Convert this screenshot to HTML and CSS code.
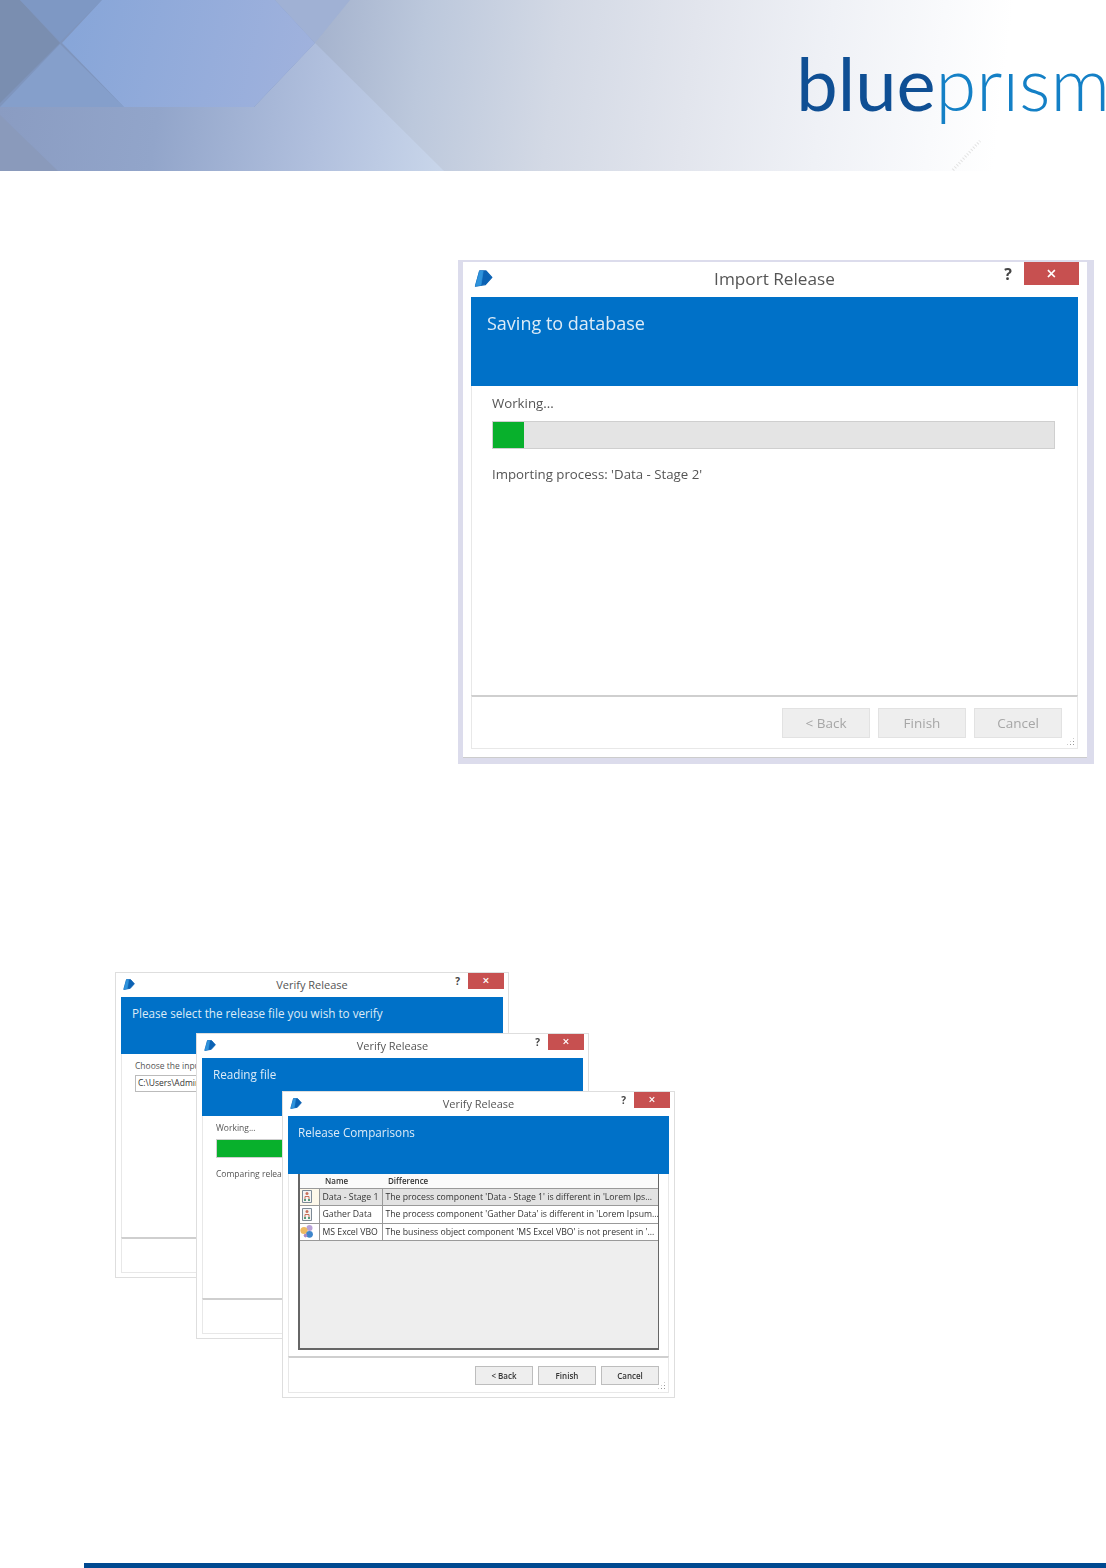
FILE: index.html
```html
<!DOCTYPE html>
<html lang="en">
<head>
  <meta charset="UTF-8" />
  <title>Blue Prism - Release Manager</title>
  <link rel="stylesheet" href="styles.css">
</head>
<body>
  <svg width="0" height="0" class="defs">
    <symbol id="bp" viewBox="0 0 12 11">
      <path d="M3.5 .6H7.6L11.4 4.8L7.2 9.4L.8 10.4Z" fill="#0b62b4" stroke="#0b62b4" stroke-width=".8" stroke-linejoin="round" />
      <path d="M3.5 .6H5.8L4.4 9.8L.8 10.4Z" fill="#2f93dc" stroke="#2f93dc" stroke-width=".4" stroke-linejoin="round" />
    </symbol>
    <symbol id="proc" viewBox="0 0 12 13">
      <path d="M1.5 .5H10.5V12.5H1.5Z" fill="#f4f4f4" stroke="#7d8a96" />
      <circle cx="6" cy="3.6" r="1.5" fill="#c9705a" />
      <path d="M4 9V6.5H8V9" fill="none" stroke="#c9705a" />
      <path d="M3 11V9H5V11ZM7 11V9H9V11Z" fill="#5a9a7a" />
    </symbol>
    <symbol id="obj" viewBox="0 0 14 13">
      <circle cx="9.5" cy="3" r="3" fill="#b8a0d8" />
      <circle cx="4" cy="5.5" r="3.6" fill="#eeba62" />
      <circle cx="9.5" cy="9.3" r="3.4" fill="#3f86cc" />
      <circle cx="5.5" cy="10.6" r="1.8" fill="#a78cc8" />
    </symbol>
    <linearGradient id="hexFill" gradientUnits="userSpaceOnUse" x1="62" y1="0" x2="315" y2="60">
      <stop offset="0" stop-color="#86a5d8" />
      <stop offset="1" stop-color="#a0b2dd" />
    </linearGradient>
    <linearGradient id="bandFill" gradientUnits="userSpaceOnUse" x1="0" y1="107" x2="444" y2="171">
      <stop offset="0" stop-color="#8a9cc2" />
      <stop offset=".35" stop-color="#92a5ca" />
      <stop offset=".7" stop-color="#b0bfdd" />
      <stop offset="1" stop-color="#c9d6ea" />
    </linearGradient>
  </svg>

  <header class="banner">
    <svg class="banner-art" viewBox="0 0 1106 171" preserveAspectRatio="none">
      <polygon points="0,0 275,0 315,43 254,108 0,108" fill="#7f95bd" />
      <polygon points="0,107 124,107 254,107 315,43 444,171 0,171" fill="url(#bandFill)" />
      <polygon points="0,0 20,0 60,43 0,103" fill="#7a8eb0" />
      <polygon points="20,0 102,0 60,42" fill="#7e98c4" />
      <polygon points="275,0 350,0 315,43" fill="#a0b1d4" />
      <polygon points="0,107 60,44 124,107" fill="#859fcb" />
      <polygon points="102,0 275,0 315,43 254,107 124,107 62,43" fill="url(#hexFill)" />
      <polygon points="0,115 58,171 0,171" fill="#8a9abb" />
      <path d="M953 170L980 141" stroke="#e2e2e2" stroke-width="3" stroke-dasharray="1 2" fill="none" />
    </svg>
    <div class="logo" aria-label="blueprism"><span class="logo-blue">blue</span><span class="logo-prism">prısm</span></div>
  </header>

  <main>
    <figure class="shot">
      <div class="win win-large">
        <div class="win-title">
          <svg class="win-icon"><use href="#bp" /></svg>
          <span class="win-name">Import Release</span>
          <div class="win-controls"><span class="win-help">?</span><span class="win-close">×</span></div>
        </div>
        <div class="win-banner">Saving to database</div>
        <div class="win-body">
          <p class="status">Working...</p>
          <div class="progress"><div class="progress-fill" style="width: 5.6%"></div></div>
          <p class="status status-detail">Importing process: 'Data - Stage 2'</p>
        </div>
        <div class="win-foot">
          <button class="btn is-disabled">&lt; Back</button>
          <button class="btn is-disabled">Finish</button>
          <button class="btn is-disabled">Cancel</button>
          <span class="grip"></span>
        </div>
      </div>
    </figure>

    <figure class="stack">
      <div class="win win-small win-a">
        <div class="win-title">
          <svg class="win-icon"><use href="#bp" /></svg>
          <span class="win-name">Verify Release</span>
          <div class="win-controls"><span class="win-help">?</span><span class="win-close">×</span></div>
        </div>
        <div class="win-banner">Please select the release file you wish to verify</div>
        <div class="win-body">
          <p class="status">Choose the input</p>
          <div class="path-input">C:\Users\Admin</div>
        </div>
        <div class="win-foot"></div>
      </div>

      <div class="win win-small win-b">
        <div class="win-title">
          <svg class="win-icon"><use href="#bp" /></svg>
          <span class="win-name">Verify Release</span>
          <div class="win-controls"><span class="win-help">?</span><span class="win-close">×</span></div>
        </div>
        <div class="win-banner">Reading file</div>
        <div class="win-body">
          <p class="status">Working...</p>
          <div class="progress"><div class="progress-fill" style="width: 60%"></div></div>
          <p class="status status-detail">Comparing release</p>
        </div>
        <div class="win-foot"></div>
      </div>

      <div class="win win-small win-c">
        <div class="win-title">
          <svg class="win-icon"><use href="#bp" /></svg>
          <span class="win-name">Verify Release</span>
          <div class="win-controls"><span class="win-help">?</span><span class="win-close">×</span></div>
        </div>
        <div class="win-banner">Release Comparisons</div>
        <div class="win-body win-body-list">
          <div class="list">
            <table class="compare">
              <thead>
                <tr><th class="col-icon"></th><th class="col-name">Name</th><th>Difference</th></tr>
              </thead>
              <tbody>
                <tr class="is-selected">
                  <td class="col-icon"><svg class="row-icon"><use href="#proc" /></svg></td>
                  <td class="col-name">Data - Stage 1</td>
                  <td>The process component 'Data - Stage 1' is different in 'Lorem Ips...</td>
                </tr>
                <tr>
                  <td class="col-icon"><svg class="row-icon"><use href="#proc" /></svg></td>
                  <td class="col-name">Gather Data</td>
                  <td>The process component 'Gather Data' is different in 'Lorem Ipsum...</td>
                </tr>
                <tr>
                  <td class="col-icon"><svg class="row-icon row-icon-wide"><use href="#obj" /></svg></td>
                  <td class="col-name">MS Excel VBO</td>
                  <td>The business object component 'MS Excel VBO' is not present in '...</td>
                </tr>
              </tbody>
            </table>
          </div>
        </div>
        <div class="win-foot">
          <button class="btn">&lt; Back</button>
          <button class="btn">Finish</button>
          <button class="btn">Cancel</button>
          <span class="grip"></span>
        </div>
      </div>
    </figure>
  </main>

  <div class="page-rule"></div>
</body>
</html>
```

FILE: styles.css
```css
:root {
  --win-blue: #0071c8;
  --bar-green: #08b02c;
}

body {
  margin: 0;
  width: 1106px;
  height: 1568px;
  overflow: hidden;
  background: white;
  font-family: "Open Sans", sans-serif;
  color: #444;
}

.defs {
  position: absolute;
}

figure {
  margin: 0;
}

p {
  margin: 0;
}

/* page banner */
.banner {
  position: relative;
  height: 171px;
  overflow: hidden;
  display: flex;
  justify-content: flex-end;
  background: linear-gradient(97deg, #a4b2cd 28%, #bcc8dc 38%, #d3d9e5 50%, #e2e5ed 62%, #eff1f6 74%, #f9fafc 84%, white 90%);
}

.banner-art {
  position: absolute;
  left: 0;
  top: 0;
  width: 100%;
  height: 100%;
}

.logo {
  position: relative;
  margin: 33px -4px 0 0;
  font-family: Lato, sans-serif;
  font-size: 74px;
  line-height: 100px;
  height: 100px;
  white-space: nowrap;
}

.logo-blue {
  color: #0f4f94;
  font-weight: 400;
}

.logo-prism {
  color: #1480c6;
  font-weight: 300;
}

/* dialog windows */
.win {
  box-sizing: border-box;
  display: flex;
  flex-direction: column;
  background: white;
}

.win-title {
  display: grid;
  grid-template-columns: 1fr auto 1fr;
  align-items: start;
}

.win-name {
  color: #555;
}

.win-controls {
  display: flex;
  justify-content: flex-end;
  align-items: center;
}

.win-help {
  font-weight: 700;
  color: #444;
}

.win-close {
  background: #c75050;
  color: white;
  text-align: center;
  font-weight: 600;
}

.win-banner {
  background: var(--win-blue);
  color: #dcebf7;
  flex-shrink: 0;
}

.win-body {
  flex: 1;
  border-left: 1px solid #e8e8e8;
  border-right: 1px solid #e8e8e8;
}

.win-foot {
  display: flex;
  justify-content: flex-end;
  position: relative;
  box-sizing: border-box;
  border: 1px solid #e8e8e8;
  border-top: 2px solid #cfcfcf;
}

.status {
  color: #555;
}

.progress {
  background: #e4e4e4;
  border: 1px solid #cfcfcf;
  box-sizing: border-box;
}

.progress-fill {
  height: 100%;
  background: var(--bar-green);
}

.btn {
  font-family: inherit;
  box-sizing: border-box;
  padding: 0;
  background: #eeeeee;
  color: #333;
  border: 1px solid #bdbdbd;
}

.btn.is-disabled {
  color: #a6a6a6;
  border-color: #e2e2e2;
}

.grip {
  position: absolute;
  right: 2px;
  bottom: 2px;
  width: 9px;
  height: 9px;
  background: radial-gradient(circle, #999 0.8px, transparent 1px) 0 0 / 3px 3px;
  clip-path: polygon(100% 0, 100% 100%, 0 100%);
}

/* the big single screenshot */
.shot {
  box-sizing: border-box;
  width: 636px;
  height: 504px;
  margin: 89px 0 0 458px;
  padding: 2px 7px 6px 5px;
  background: #dcdcec;
  filter: blur(0.6px);
}

.win-large {
  height: 100%;
  padding: 0 9px 8px 8px;
  border-bottom: 1px solid #ccc;
}

.win-large .win-title {
  height: 35px;
}

.win-large .win-icon {
  width: 19px;
  height: 17px;
  margin: 8px 0 0 3px;
}

.win-large .win-name {
  font-size: 17.2px;
  line-height: 33px;
}

.win-large .win-controls {
  margin-right: -1px;
}

.win-large .win-help {
  font-size: 16px;
  margin-right: 12px;
}

.win-large .win-close {
  width: 55px;
  height: 23px;
  font-size: 18px;
  line-height: 22px;
}

.win-large .win-banner {
  height: 89px;
  padding: 13px 0 0 16px;
  font-size: 18px;
  line-height: 26px;
  box-sizing: border-box;
}

.win-large .win-body {
  padding: 7px 22px 0 20px;
}

.win-large .status {
  font-size: 13.25px;
  line-height: 20px;
}

.win-large .progress {
  height: 28px;
  margin-top: 8px;
}

.win-large .status-detail {
  margin-top: 15px;
}

.win-large .win-foot {
  height: 54px;
  gap: 8px;
  padding: 11px 15px 0 0;
}

.win-large .btn {
  width: 88px;
  height: 30px;
  font-size: 13.5px;
}

/* the small overlapping dialogs */
.stack {
  position: relative;
  width: 560px;
  height: 426px;
  margin: 208px 0 0 115px;
  filter: blur(0.3px);
}

.win-small {
  position: absolute;
  padding: 0 5px 4px;
  border: 1px solid #dedede;
}

.win-a {
  left: 0;
  top: 0;
  width: 394px;
  height: 306px;
}

.win-b {
  left: 81px;
  top: 61px;
  width: 393px;
  height: 306px;
}

.win-b .win-foot {
  height: 35px;
}

.win-c {
  left: 167px;
  top: 119px;
  width: 393px;
  height: 307px;
}

.win-small .win-title {
  height: 24px;
}

.win-small .win-icon {
  width: 12px;
  height: 11px;
  margin: 6px 0 0 2px;
}

.win-small .win-name {
  font-size: 11px;
  line-height: 23px;
}

.win-small .win-controls {
  margin-right: -1px;
}

.win-small .win-help {
  font-size: 10px;
  margin-right: 8px;
}

.win-small .win-close {
  width: 36px;
  height: 16px;
  font-size: 12px;
  line-height: 15px;
}

.win-small .win-banner {
  box-sizing: border-box;
  padding: 7px 0 0 11px;
  font-size: 11.7px;
  line-height: 18px;
}

.win-a .win-banner {
  height: 57px;
}

.win-b .win-banner,
.win-c .win-banner {
  height: 58px;
}

.win-small.win-c .win-banner {
  padding-left: 10px;
}

.win-small .win-body {
  padding: 5px 10px 0 13px;
}

.win-small .status {
  font-size: 8.5px;
  line-height: 14px;
}

.path-input {
  box-sizing: border-box;
  height: 17px;
  margin-top: 2px;
  padding-left: 2px;
  border: 1px solid #bbb;
  font-size: 8.5px;
  line-height: 14px;
  color: #333;
  white-space: nowrap;
  overflow: hidden;
}

.win-small .progress {
  height: 19px;
  margin-top: 4px;
}

.win-small .status-detail {
  margin-top: 9px;
}

.win-small .win-foot {
  height: 36px;
  gap: 5px;
  padding: 8px 9px 0 0;
}

.win-small.win-c .win-foot {
  height: 37px;
}

.win-small .btn {
  width: 58px;
  height: 19px;
  font-size: 8px;
  font-weight: 600;
}

.win-small .win-body-list {
  padding: 0 9px 6px;
  display: flex;
}

.list {
  flex: 1;
  background: #eeeeee;
  border: 2px solid #666;
  border-top: 0;
  border-right-width: 1px;
}

.compare {
  width: 100%;
  table-layout: fixed;
  border-collapse: collapse;
  font-size: 8.7px;
  color: #333;
}

.compare th {
  box-sizing: border-box;
  height: 14px;
  padding: 0 0 0 6px;
  background: #fafafa;
  font-weight: 600;
  font-size: 8px;
  text-align: left;
  line-height: 12px;
  border-bottom: 1px solid #999;
}

.compare th.col-icon {
  width: 19px;
  padding: 0;
}

.compare th.col-name {
  width: 63px;
}

.compare td {
  height: 16.5px;
  padding: 0 0 0 3px;
  background: white;
  white-space: nowrap;
  overflow: hidden;
  border-bottom: 1px solid #999;
  border-right: 1px solid #999;
  line-height: 12px;
}

.compare td:last-child {
  border-right: 0;
}

.compare .is-selected td {
  background: #e2e2e2;
}

.compare td.col-icon {
  padding: 0 0 0 1px;
  line-height: 0;
}

.compare .is-selected td.col-icon {
  background: #fdf8ea;
}

.row-icon {
  width: 12px;
  height: 13px;
}

.row-icon-wide {
  width: 14px;
  margin-left: -1px;
}

.page-rule {
  height: 5px;
  margin: 165px 0 0 84px;
  background: #004990;
}
```
